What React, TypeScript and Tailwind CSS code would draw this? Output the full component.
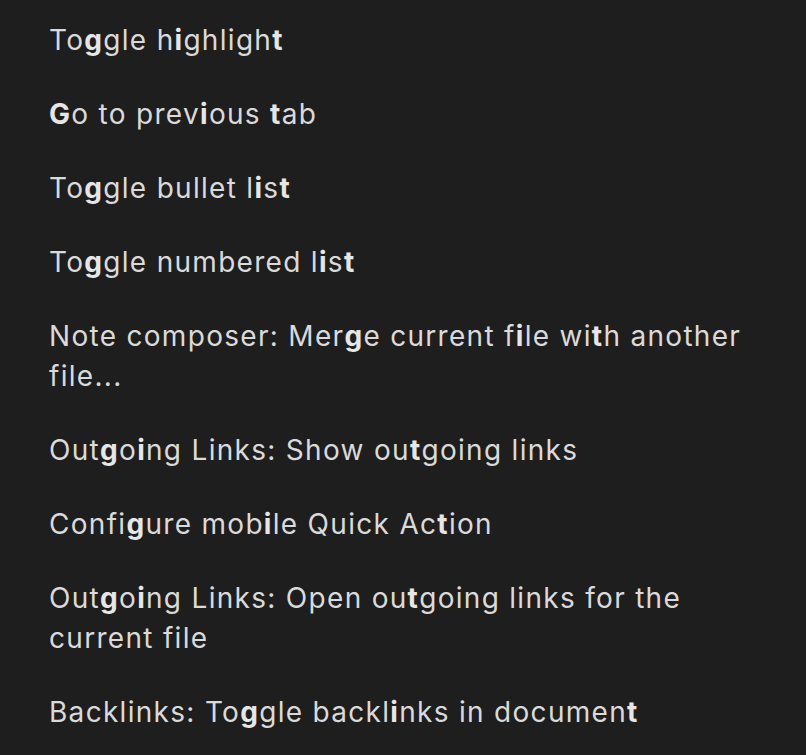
import React from 'react';

// Fuzzy-match results; letters in [brackets] are the matched (bold) ones
const suggestions: string[] = [
  'To[g]gle h[i]ghligh[t]',
  '[G]o to prev[i]ous [t]ab',
  'To[g]gle bullet l[i]s[t]',
  'To[g]gle numbered l[i]s[t]',
  'Note composer: Mer[g]e current f[i]le wi[t]h another file...',
  'Out[g]o[i]ng Links: Show ou[t]going links',
  'Confi[g]ure mob[i]le Quick Ac[t]ion',
  'Out[g]o[i]ng Links: Open ou[t]going links for the current file',
  'Backlinks: To[g]gle backl[i]nks in documen[t]',
];

const renderMatch = (text: string) => {
  const parts = text.split(/(\[[^\]]+\])/g).filter(Boolean);
  return parts.map((part, i) =>
    part.startsWith('[') ? (
      <span key={i} className="font-bold text-[#e6e6e6]">
        {part.slice(1, -1)}
      </span>
    ) : (
      <span key={i}>{part}</span>
    )
  );
};

export default function App() {
  return (
    <div
      className="min-h-screen w-full bg-[#1e1e1e] text-[#dadada] pt-[3px] pl-[49px] pr-[49px]"
      style={{ fontFamily: 'Inter, "Noto Sans", sans-serif' }}
    >
      <ul className="flex flex-col">
        {suggestions.map((s, i) => (
          <li key={i} className="py-[17px] text-[28px] leading-[40px] tracking-[1.3px]">
            {renderMatch(s)}
          </li>
        ))}
      </ul>
    </div>
  );
}
